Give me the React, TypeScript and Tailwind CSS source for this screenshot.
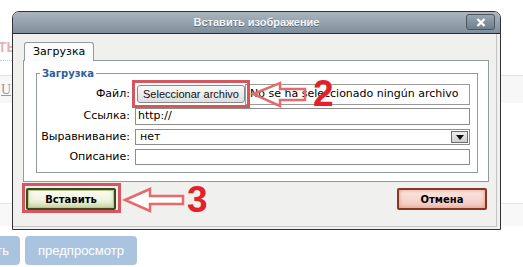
import React from "react";

export default function App() {
  return (
    <div className="relative w-[523px] h-[267px] overflow-hidden bg-white font-['DejaVu_Sans',sans-serif] text-black">
      {/* background page */}
      <div className="flex flex-col">
        <div className="h-[40px]" />
        <div className="h-[15px] -ml-[2px] text-[14px] leading-[15px] font-bold text-[#e2b3ba] font-['Liberation_Sans',sans-serif]">ТЬ</div>
        <div className="mt-[5px] w-[12px] border-b border-dotted border-[#c8c8c8]" />
        <div className="mt-[14px] h-[28px] border-t border-[#e2e2e2] bg-[#f7f7f7] flex items-center pl-[1px]">
          <span className="text-[14px] underline text-[#9a9a9a] font-['Liberation_Serif',serif]">U</span>
        </div>
        <div className="mt-[100px] h-[23px] border-t border-[#e6e6e6] bg-[#f8f8f8]" />
        <div className="mt-[10px] flex gap-[5px]">
          <div className="-ml-[60px] w-[80px] h-[29px] rounded-[4px] bg-[#aac4e0] text-white text-[13px] flex items-center justify-end pr-[11px] font-['Liberation_Sans',sans-serif]">ить</div>
          <div className="w-[112px] h-[29px] rounded-[4px] bg-[#aac4e0] text-white text-[13px] flex items-center justify-center font-['Liberation_Sans',sans-serif]">предпросмотр</div>
        </div>
      </div>

      {/* dialog */}
      <div className="absolute left-[12px] top-[11px] w-[489px] h-[219px] flex flex-col border border-[#333] rounded-t-[7px] overflow-hidden bg-[#f0f0ee]">
        <div className="relative h-[22px] shrink-0 border-b border-[#2a2a2a] bg-[linear-gradient(#a9b6c0,#7f8f9b)] flex items-center justify-center">
          <span className="text-[11px] font-bold text-[#f4f7fa] font-['Liberation_Sans',sans-serif] [text-shadow:0_1px_0_#5d6d79]">Вставить изображение</span>
          <div className="absolute right-[5px] top-[2px] w-[29px] h-[16px] rounded-[3px] border border-[#4b5660] bg-[linear-gradient(#98a6b1,#6f7f8b)] flex items-center justify-center">
            <svg width="10" height="9" viewBox="0 0 10 9">
              <path d="M1.5 1 L8.5 8 M8.5 1 L1.5 8" stroke="#ffffff" strokeWidth="2.4" />
            </svg>
          </div>
        </div>

        <div className="relative flex-1 flex flex-col">
          <div className="absolute left-0 top-0 right-[3px] bottom-[2px] border-r border-b border-[#c4c4c4] pointer-events-none" />
          {/* tabs */}
          <div className="pt-[8px] pl-[11px] flex">
            <div className="relative z-10 h-[19px] -mb-[1px] px-[8px] border border-b-0 border-[#919b9c] rounded-t-[3px] bg-[#fbfbfb] text-[11px] leading-[17px]">Загрузка</div>
          </div>
          {/* panel */}
          <div className="ml-[10px] w-[466px] h-[122px] border border-[#919b9c] bg-white pt-[6px] pl-[12px]">
            <fieldset className="w-[442px] border border-[#919b9c] pb-[7px]">
              <legend className="ml-[3px] px-[2px] text-[10px] leading-[13px] font-bold text-[#2d5f9e]">Загрузка</legend>
              <div className="flex flex-col pt-[2px]">
                <div className="flex items-center h-[24px]">
                  <div className="w-[98px] text-right pr-[5px] text-[11px]">Файл:</div>
                  <div className="ml-[2px] w-[108px] h-[18px] rounded-[3px] border border-[#8a8a8a] bg-[linear-gradient(#fafafa,#dedede)] flex items-center justify-center text-[11px] font-['Liberation_Sans',sans-serif] text-[#111]">Seleccionar archivo</div>
                  <div className="w-[225px] h-[21px] border border-[#9a9a9a] bg-white flex items-center pl-[4px] text-[11px] whitespace-nowrap overflow-hidden">No se ha seleccionado ningún archivo</div>
                </div>
                <div className="flex items-center h-[17px] mt-[2px]">
                  <div className="w-[98px] text-right pr-[5px] text-[11px]">Ссылка:</div>
                  <div className="w-[335px] h-[17px] border border-[#8d8d8d] bg-white flex items-center pl-[2px] text-[11px]">http://</div>
                </div>
                <div className="flex items-center h-[16px] mt-[4px]">
                  <div className="w-[98px] text-right pr-[5px] text-[11px]">Выравнивание:</div>
                  <div className="w-[335px] h-[16px] border border-[#8d8d8d] bg-white flex items-center pl-[4px] text-[11px]">
                    <span className="flex-1">нет</span>
                    <div className="mr-[1px] w-[17px] h-[12px] border border-[#6d6d6d] bg-[linear-gradient(#eeeeee,#cfcfcf)] flex items-center justify-center">
                      <svg width="8" height="5" viewBox="0 0 8 5"><path d="M0 0 H8 L4 5 Z" fill="#111" /></svg>
                    </div>
                  </div>
                </div>
                <div className="flex items-center h-[16px] mt-[4px]">
                  <div className="w-[98px] text-right pr-[5px] text-[11px]">Описание:</div>
                  <div className="w-[335px] h-[16px] border border-[#8d8d8d] bg-white" />
                </div>
              </div>
            </fieldset>
          </div>
          {/* buttons */}
          <div className="mt-[6px] px-[13px] flex justify-between">
            <div className="w-[90px] h-[22px] rounded-[2px] border-2 border-[#3b4820] bg-[linear-gradient(#fbfcf1,#e7edcf)] shadow-[inset_0_0_0_1px_#b9c68c,inset_0_-3px_5px_#c3cf9b] flex items-center justify-center text-[10px] font-bold">Вставить</div>
            <div className="w-[90px] h-[22px] rounded-[2px] border-2 border-[#8a3422] bg-[linear-gradient(#fce8e2,#f0c6bc)] shadow-[inset_0_0_4px_#dc9485] flex items-center justify-center text-[10px] font-bold">Отмена</div>
          </div>
        </div>
      </div>

      {/* annotations */}
      <div className="absolute left-[132px] top-[80px] w-[118px] h-[28px] border-[3px] border-[#d6565e]" />
      <svg className="absolute left-[250px] top-[80px]" width="60" height="30" viewBox="0 0 60 30">
        <path d="M3 14 L30 3 L30 9 L55 9 L55 20 L30 20 L30 26 Z" fill="none" stroke="#e36b6b" strokeWidth="2.5" strokeLinejoin="miter" />
      </svg>
      <div className="absolute left-[313px] top-[74px] text-[37px] leading-[40px] font-bold text-[#e3202b] font-['Liberation_Sans',sans-serif]">2</div>

      <div className="absolute left-[22px] top-[183px] w-[99px] h-[30px] border-[3px] border-[#d6565e]" />
      <svg className="absolute left-[122px] top-[186px]" width="64" height="28" viewBox="0 0 64 28">
        <path d="M3 14 L28 3 L28 10 L61 10 L61 18 L28 18 L28 25 Z" fill="#ffffff" stroke="#e36b6b" strokeWidth="2.5" strokeLinejoin="miter" />
      </svg>
      <div className="absolute left-[187px] top-[180px] text-[37px] leading-[40px] font-bold text-[#e3202b] font-['Liberation_Sans',sans-serif]">3</div>
    </div>
  );
}
